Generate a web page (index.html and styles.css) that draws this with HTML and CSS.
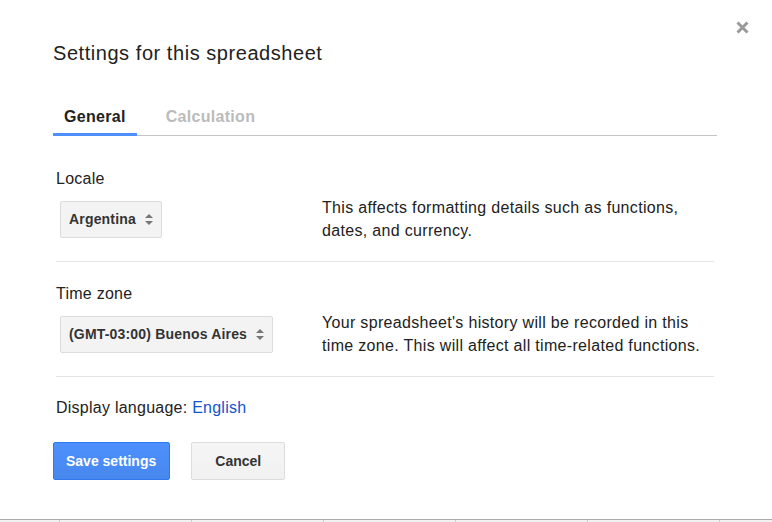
FILE: index.html
```html
<!DOCTYPE html>
<html>
<head>
<meta charset="utf-8">
<link rel="stylesheet" href="styles.css">
</head>
<body>
<div class="page">
  <div class="dialog">
    <button class="close" aria-label="Close">
      <svg width="15" height="15" viewBox="0 0 15 15"><path d="M2.5 2.5 L12.5 12.5 M12.5 2.5 L2.5 12.5" stroke="#9a9a9a" stroke-width="3" fill="none"/></svg>
    </button>
    <h1 class="title">Settings for this spreadsheet</h1>
    <div class="tabs">
      <div class="tab active">General</div>
      <div class="tab">Calculation</div>
    </div>
    <div class="content">
      <div class="section">
        <div class="label">Locale</div>
        <div class="row">
          <div class="select-col">
            <div class="select">
              <span>Argentina</span>
              <svg class="arrows" width="8" height="11" viewBox="0 0 8 11"><path d="M0 4 L4 0 L8 4 Z M0 7 L8 7 L4 11 Z" fill="#777"/></svg>
            </div>
          </div>
          <div class="desc">This affects formatting details such as functions, dates, and currency.</div>
        </div>
      </div>
      <div class="section">
        <div class="label">Time zone</div>
        <div class="row">
          <div class="select-col">
            <div class="select">
              <span>(GMT-03:00) Buenos Aires</span>
              <svg class="arrows" width="8" height="11" viewBox="0 0 8 11"><path d="M0 4 L4 0 L8 4 Z M0 7 L8 7 L4 11 Z" fill="#777"/></svg>
            </div>
          </div>
          <div class="desc">Your spreadsheet's history will be recorded in this time zone. This will affect all time-related functions.</div>
        </div>
      </div>
      <div class="lang">Display language: <a class="link" href="#">English</a></div>
    </div>
    <div class="buttons">
      <button class="btn primary">Save settings</button>
      <button class="btn">Cancel</button>
    </div>
  </div>
  <div class="sheet">
    <div class="cell head"></div>
    <div class="cell"></div>
    <div class="cell"></div>
    <div class="cell"></div>
    <div class="cell"></div>
    <div class="cell"></div>
    <div class="cell last"></div>
  </div>
</div>
</body>
</html>
```
FILE: styles.css
```css
* { box-sizing: border-box; }
html, body { margin: 0; padding: 0; background: #fff; }
body {
  font-family: "Liberation Sans", Arial, sans-serif;
  color: #222;
}
.page {
  width: 772px;
  height: 522px;
  display: flex;
  flex-direction: column;
  overflow: hidden;
}
.dialog {
  position: relative;
  flex: 1;
  padding: 41px 0 0 53px;
  background: #fff;
}
.close {
  position: absolute;
  top: 20px;
  left: 735px;
  width: 15px;
  height: 15px;
  padding: 0;
  border: 0;
  background: none;
  display: block;
}
.close svg { display: block; }
.title {
  margin: 0;
  font-size: 20px;
  line-height: 24px;
  font-weight: normal;
  letter-spacing: 0.55px;
  color: #222;
}
.tabs {
  margin-top: 41px;
  width: 664px;
  display: flex;
  gap: 18px;
  border-bottom: 1px solid #c4c4c4;
}
.tab {
  font-size: 16px;
  line-height: 20px;
  font-weight: bold;
  letter-spacing: 0.3px;
  color: #bbb;
  padding: 1px 11px 6px;
  border-bottom: 3px solid transparent;
  margin-bottom: -1px;
}
.tab.active {
  color: #222;
  border-bottom-color: #4d90fe;
}
.content {
  margin: 12px 0 0 3px;
  width: 658px;
  letter-spacing: 0.25px;
}
.section {
  padding: 21px 0 19px;
  border-bottom: 1px solid #e5e5e5;
}
.section + .section { padding-top: 22px; }
.label {
  font-size: 16px;
  line-height: 20px;
}
.row {
  margin-top: 7px;
  display: grid;
  grid-template-columns: 266px 1fr;
  align-items: center;
}
.select-col { padding-left: 4px; }
.select {
  display: inline-flex;
  align-items: center;
  gap: 9px;
  height: 37px;
  padding: 0 8px;
  background: #f3f3f3;
  border: 1px solid #dcdcdc;
  border-radius: 2px;
  font-size: 14px;
  font-weight: bold;
  letter-spacing: 0.18px;
  color: #333;
}
.arrows { display: block; }
.desc {
  font-size: 16px;
  line-height: 23px;
  letter-spacing: 0.32px;
  color: #222;
}
.lang {
  padding-top: 21px;
  font-size: 16px;
  line-height: 20px;
}
.link {
  color: #15c;
  text-decoration: none;
}
.buttons {
  margin-top: 24px;
  display: flex;
  gap: 21px;
}
.btn {
  height: 38px;
  padding: 0 23px;
  font-family: "Liberation Sans", Arial, sans-serif;
  font-size: 14px;
  font-weight: bold;
  color: #333;
  background: linear-gradient(#f5f5f5, #f1f1f1);
  border: 1px solid #dcdcdc;
  border-radius: 2px;
}
.btn.primary {
  padding: 0 13px 0 12px;
  color: #fff;
  background: linear-gradient(#4d90fe, #4787ed);
  border-color: #3079ed;
}
.sheet {
  height: 3px;
  display: flex;
  border-top: 1px solid #aaa;
  background: #f1f1f1;
}
.cell {
  width: 132px;
  border-right: 1px solid #ccc;
}
.cell.head { width: 60px; }
.cell.last { flex: 1; border-right: 0; }
```
